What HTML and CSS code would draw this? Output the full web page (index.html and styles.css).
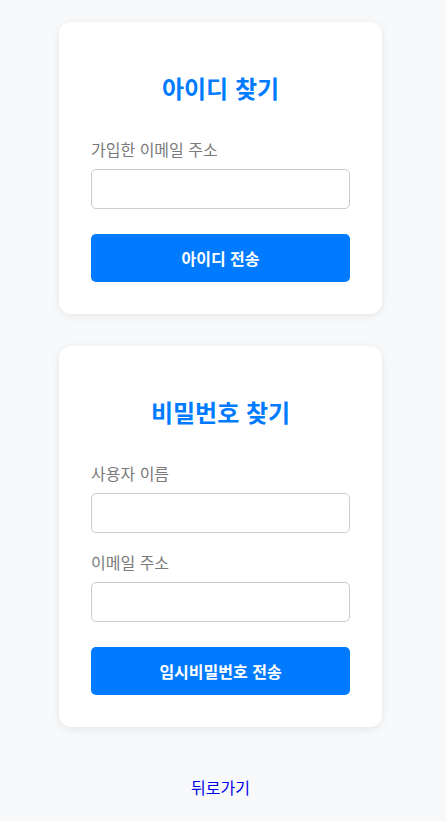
FILE: index.html
```html
<!DOCTYPE html>
<html lang="ko">
<head>
<meta charset="utf-8">
<title>아이디/비밀번호 찾기</title>
<link rel="stylesheet" href="styles.css">
</head>
<body>
<main class="page">
  <section class="card">
    <h2 class="card-title">아이디 찾기</h2>
    <div class="form-group">
      <label class="label" for="email1">가입한 이메일 주소</label>
      <input class="input" id="email1" type="email">
    </div>
    <button class="btn" type="button">아이디 전송</button>
  </section>

  <section class="card">
    <h2 class="card-title">비밀번호 찾기</h2>
    <div class="form-group">
      <label class="label" for="username">사용자 이름</label>
      <input class="input" id="username" type="text">
    </div>
    <div class="form-group">
      <label class="label" for="email2">이메일 주소</label>
      <input class="input" id="email2" type="email">
    </div>
    <button class="btn" type="button">임시비밀번호 전송</button>
  </section>

  <a class="back-link" href="#">뒤로가기</a>
</main>
</body>
</html>
```

FILE: styles.css
```css
* {
  box-sizing: border-box;
}

html, body {
  margin: 0;
  padding: 0;
  background: #f8f9fa;
}

body {
  font-family: "Noto Sans CJK KR", "Noto Sans", sans-serif;
  font-size: 16px;
  color: #333;
}

.page {
  width: 323px;
  margin-left: 59px;
  padding-top: 22px;
  display: flex;
  flex-direction: column;
}

.card {
  background: #ffffff;
  border-radius: 12px;
  box-shadow: 0 2px 8px rgba(0, 0, 0, 0.08);
  padding: 32px;
  margin-bottom: 32px;
  display: flex;
  flex-direction: column;
}

.card-title {
  margin: 17px 0 32px;
  font-size: 24px;
  line-height: 34px;
  font-weight: 700;
  color: #007bff;
  text-align: center;
}

.form-group {
  display: flex;
  flex-direction: column;
  margin-bottom: 17px;
}

.label {
  font-size: 16px;
  line-height: 24px;
  color: #7a7a7a;
  margin-bottom: 8px;
}

.input {
  height: 40px;
  border: 1px solid #cccccc;
  border-radius: 5px;
  background: #fff;
  font-size: 16px;
  padding: 0 10px;
  outline: none;
}

.btn {
  margin-top: 8px;
  height: 48px;
  border: none;
  border-radius: 5px;
  background: #007bff;
  color: #ffffff;
  font-family: "Noto Sans CJK KR", "Noto Sans", sans-serif;
  font-size: 16px;
  font-weight: 700;
  cursor: pointer;
}

.back-link {
  align-self: center;
  margin-top: 16px;
  font-size: 16px;
  line-height: 24px;
  color: #0000ee;
  text-decoration: none;
}
```
